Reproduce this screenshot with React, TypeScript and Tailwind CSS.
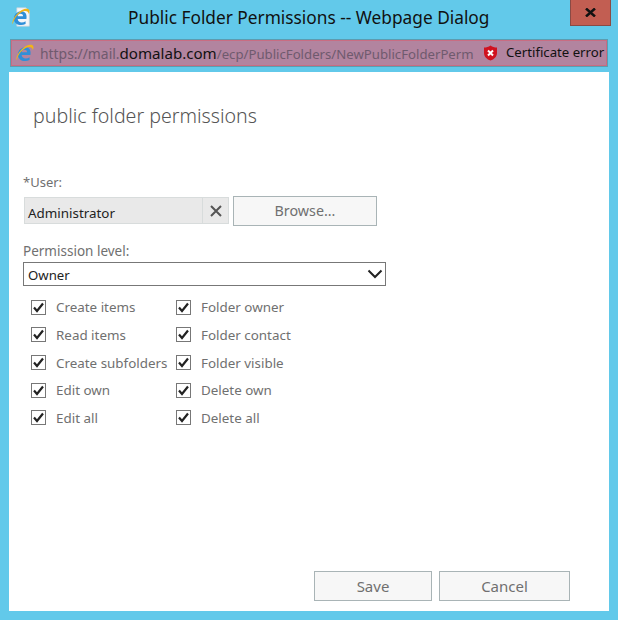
const font = { fontFamily: '"Noto Sans", "Open Sans", sans-serif' };

function IeLogo({ size, page }: { size: number; page?: boolean }) {
  return (
    <svg width={size} height={size} viewBox="0 0 24 24" className="shrink-0">
      {page && <path d="M7 1h11l4 4v18H7z" fill="#f4f6f8" stroke="#c8d0d8" strokeWidth="0.8" />}
      <path d="M19 14.500H8c.3 4.500 6 5 9.500 2.500v3.500c-6.500 3-14 .3-14-6.500 0-6 5-9.500 9.500-9 4.500.4 6.500 4 5.500 9.500zM8 11h6.500c0-3.800-6-3.800-6.500 0z" fill="#2f8fd8" />
      <path d="M2 21C0 16 8 5 16 2.500c5-1.500 7.500 1 5.500 6C20.500 4 16.500 4 12 6.500 7 9.500 3 15 2 21z" fill="#f2b417" />
    </svg>
  );
}

function Check({ label }: { label: string }) {
  return (
    <div className="flex h-[27.600px] items-center">
      <span className="flex h-[15px] w-[15px] shrink-0 items-center justify-center border border-[#777] bg-white">
        <svg width="13" height="13" viewBox="0 0 13 13">
          <path d="M2 6.500 5 10 11 2.500" fill="none" stroke="#222" strokeWidth="2.200" />
        </svg>
      </span>
      <span className="ml-[10px] whitespace-nowrap text-[13.400px] text-[#707070]">{label}</span>
    </div>
  );
}

export default function App() {
  const left = ["Create items", "Read items", "Create subfolders", "Edit own", "Edit all"];
  const right = ["Folder owner", "Folder contact", "Folder visible", "Delete own", "Delete all"];
  return (
    <div style={font} className="flex h-[620px] w-[618px] flex-col overflow-hidden bg-[#62c9ea]">
      <div className="flex h-[38px] shrink-0 items-start">
        <div className="ml-[11px] mt-[7px]"><IeLogo size={20} page /></div>
        <div className="ml-[97px] mt-[6px] whitespace-nowrap text-[17.300px] leading-[24px] text-[#111]">
          Public Folder Permissions -- Webpage Dialog
        </div>
        <div className="ml-auto mr-[7px] flex h-[26px] w-[41px] items-center justify-center border border-[#8a4a44] border-t-0 bg-[#c25e52]">
          <svg width="11" height="9" viewBox="0 0 11 9">
            <path d="M1 0.500 10 8.500M10 0.500 1 8.500" stroke="#111" strokeWidth="2.500" />
          </svg>
        </div>
      </div>
      <div className="mx-[10px] mt-px flex h-[28px] shrink-0 items-center border-2 border-[#5c9cb0] bg-[#b2849f] outline-1 outline-[#c96c82] -outline-offset-2">
        <div className="ml-[3px]"><IeLogo size={20} /></div>
        <div className="ml-[5px] w-[432px] whitespace-nowrap text-[13.900px] text-[#6f5a6e]">
          https://mail.<span className="text-[15.100px] text-[#111]">domalab.com</span><span className="text-[13.200px]">/ecp/PublicFolders/NewPublicFolderPerm</span>
        </div>
        <svg width="15" height="16" viewBox="0 0 15 16" className="ml-[11px] shrink-0">
          <path d="M7.500 0.500C9.500 2 11.500 2.500 14 2.500V8c0 3.500-3 6.500-6.500 7.500C4 14.500 1 11.500 1 8V2.500C3.500 2.500 5.500 2 7.500 0.500z" fill="#d0121f" />
          <path d="M5 5.500 10 10.500M10 5.500 5 10.500" stroke="#fff" strokeWidth="2" />
        </svg>
        <span className="ml-[8px] whitespace-nowrap text-[13.200px] text-[#111]">Certificate error</span>
      </div>
      <div className="mx-[9px] mb-[9px] mt-[5px] flex min-h-0 flex-1 flex-col bg-white">
        <h1 className="ml-[24px] mt-[29px] text-[19.600px] leading-[30px] font-light text-[#555]">public folder permissions</h1>
        <div className="ml-[14px] mt-[42px] text-[13px] leading-[18px] text-[#707070]">*User:</div>
        <div className="ml-[15px] mt-[6px] flex items-start">
          <div className="flex h-[27px] w-[205px] border border-[#d8dcdc] bg-[#e9e9e9]">
            <div className="flex flex-1 items-center pl-[3px] pt-[5px] text-[13.400px] text-[#222]">Administrator</div>
            <div className="flex w-[26px] items-center justify-center border-l border-[#d8dcdc]">
              <svg width="12" height="12" viewBox="0 0 12 12">
                <path d="M1 1 11 11M11 1 1 11" stroke="#555" strokeWidth="2" />
              </svg>
            </div>
          </div>
          <div className="-mt-px ml-[4px] flex h-[30px] w-[144px] items-center justify-center border border-[#a9b4b6] bg-[#f7f7f7] text-[14.300px] text-[#707070]">
            Browse...
          </div>
        </div>
        <div className="ml-[14px] mt-[16px] text-[13.500px] leading-[18px] text-[#707070]">Permission level:</div>
        <div className="ml-[14px] mt-[2px] flex h-[24px] w-[363px] items-center justify-between border border-[#777] bg-white pl-[4px] pr-[2px] pt-[3px] text-[13.200px] text-[#222]">
          <span>Owner</span>
          <svg width="16" height="10" viewBox="0 0 16 10" className="-mt-[4px]">
            <path d="M1.500 1.500 8 8 14.500 1.500" fill="none" stroke="#222" strokeWidth="2" />
          </svg>
        </div>
        <div className="ml-[22px] mt-[7.600px] flex">
          <div className="w-[145px]">{left.map((l) => <Check key={l} label={l} />)}</div>
          <div>{right.map((l) => <Check key={l} label={l} />)}</div>
        </div>
        <div className="mb-[10px] mr-[39px] mt-auto flex justify-end gap-[7px]">
          <div className="flex h-[30px] w-[118px] items-center justify-center border border-[#a9b4b6] bg-[#f7f7f7] text-[15px] text-[#707070]">Save</div>
          <div className="flex h-[30px] w-[131px] items-center justify-center border border-[#a9b4b6] bg-[#f7f7f7] text-[15px] text-[#707070]">Cancel</div>
        </div>
      </div>
    </div>
  );
}
